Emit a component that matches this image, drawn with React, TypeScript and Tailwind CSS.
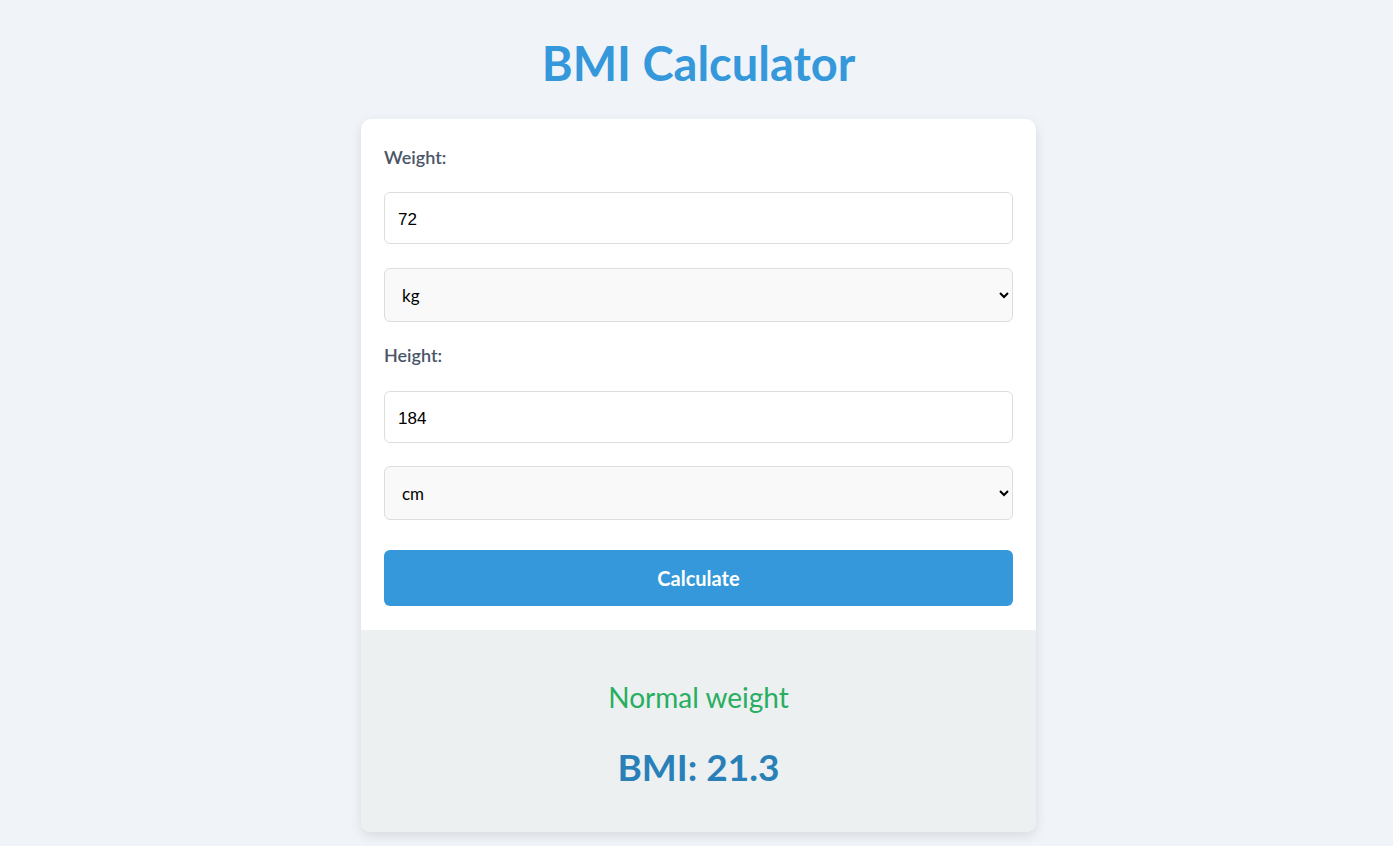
import { useState } from "react";

export default function App() {
  const [weight, setWeight] = useState("72");
  const [weightUnit, setWeightUnit] = useState("kg");
  const [height, setHeight] = useState("184");
  const [heightUnit, setHeightUnit] = useState("cm");

  return (
    <div
      className="min-h-screen w-full bg-[#f0f4f8] flex flex-col items-center pl-[4px]"
      style={{ fontFamily: '"Lato", "Noto Sans", sans-serif' }}
    >
      <h1 className="mt-[35px] text-[47px] leading-[56px] font-bold text-[#3498db]">
        BMI Calculator
      </h1>

      {/* Card */}
      <div className="mt-[28px] w-[675px] bg-white rounded-[10px] shadow-[0_4px_12px_rgba(0,0,0,0.1)] overflow-hidden">
        <div className="px-[23px] pt-[26px] pb-[24px] flex flex-col">
          <label className="text-[18px] leading-[24px] font-semibold text-[#4a5568]">Weight:</label>
          <input
            value={weight}
            onChange={(e) => setWeight(e.target.value)}
            className="mt-[23px] h-[52px] w-full px-[13px] pt-[3px] border border-[#dddddd] rounded-[6px] text-[17px] text-black bg-white outline-none"
            style={{ fontFamily: '"Liberation Sans", Arial, sans-serif' }}
          />
          <select
            value={weightUnit}
            onChange={(e) => setWeightUnit(e.target.value)}
            className="mt-[24px] h-[54px] w-full px-[13px] border border-[#dddddd] rounded-[6px] text-[17px] text-black bg-[#f9f9f9] outline-none"
          >
            <option value="kg">kg</option>
            <option value="lb">lb</option>
          </select>

          <label className="mt-[21px] text-[18px] leading-[24px] font-semibold text-[#4a5568]">Height:</label>
          <input
            value={height}
            onChange={(e) => setHeight(e.target.value)}
            className="mt-[24px] h-[52px] w-full px-[13px] pt-[3px] border border-[#dddddd] rounded-[6px] text-[17px] text-black bg-white outline-none"
            style={{ fontFamily: '"Liberation Sans", Arial, sans-serif' }}
          />
          <select
            value={heightUnit}
            onChange={(e) => setHeightUnit(e.target.value)}
            className="mt-[23px] h-[54px] w-full px-[13px] border border-[#dddddd] rounded-[6px] text-[17px] text-black bg-[#f9f9f9] outline-none"
          >
            <option value="cm">cm</option>
            <option value="in">in</option>
          </select>

          <button className="mt-[30px] h-[56px] w-full rounded-[6px] bg-[#3498db] text-white text-[20px] font-bold">
            Calculate
          </button>
        </div>

        {/* Result */}
        <div className="bg-[#ecf0f1] h-[202px] flex flex-col items-center">
          <p className="mt-[50px] text-[28px] leading-[34px] text-[#27ae60]">Normal weight</p>
          <p className="mt-[30px] text-[37px] leading-[46px] font-bold text-[#2980b9]">BMI: 21.3</p>
        </div>
      </div>
    </div>
  );
}
